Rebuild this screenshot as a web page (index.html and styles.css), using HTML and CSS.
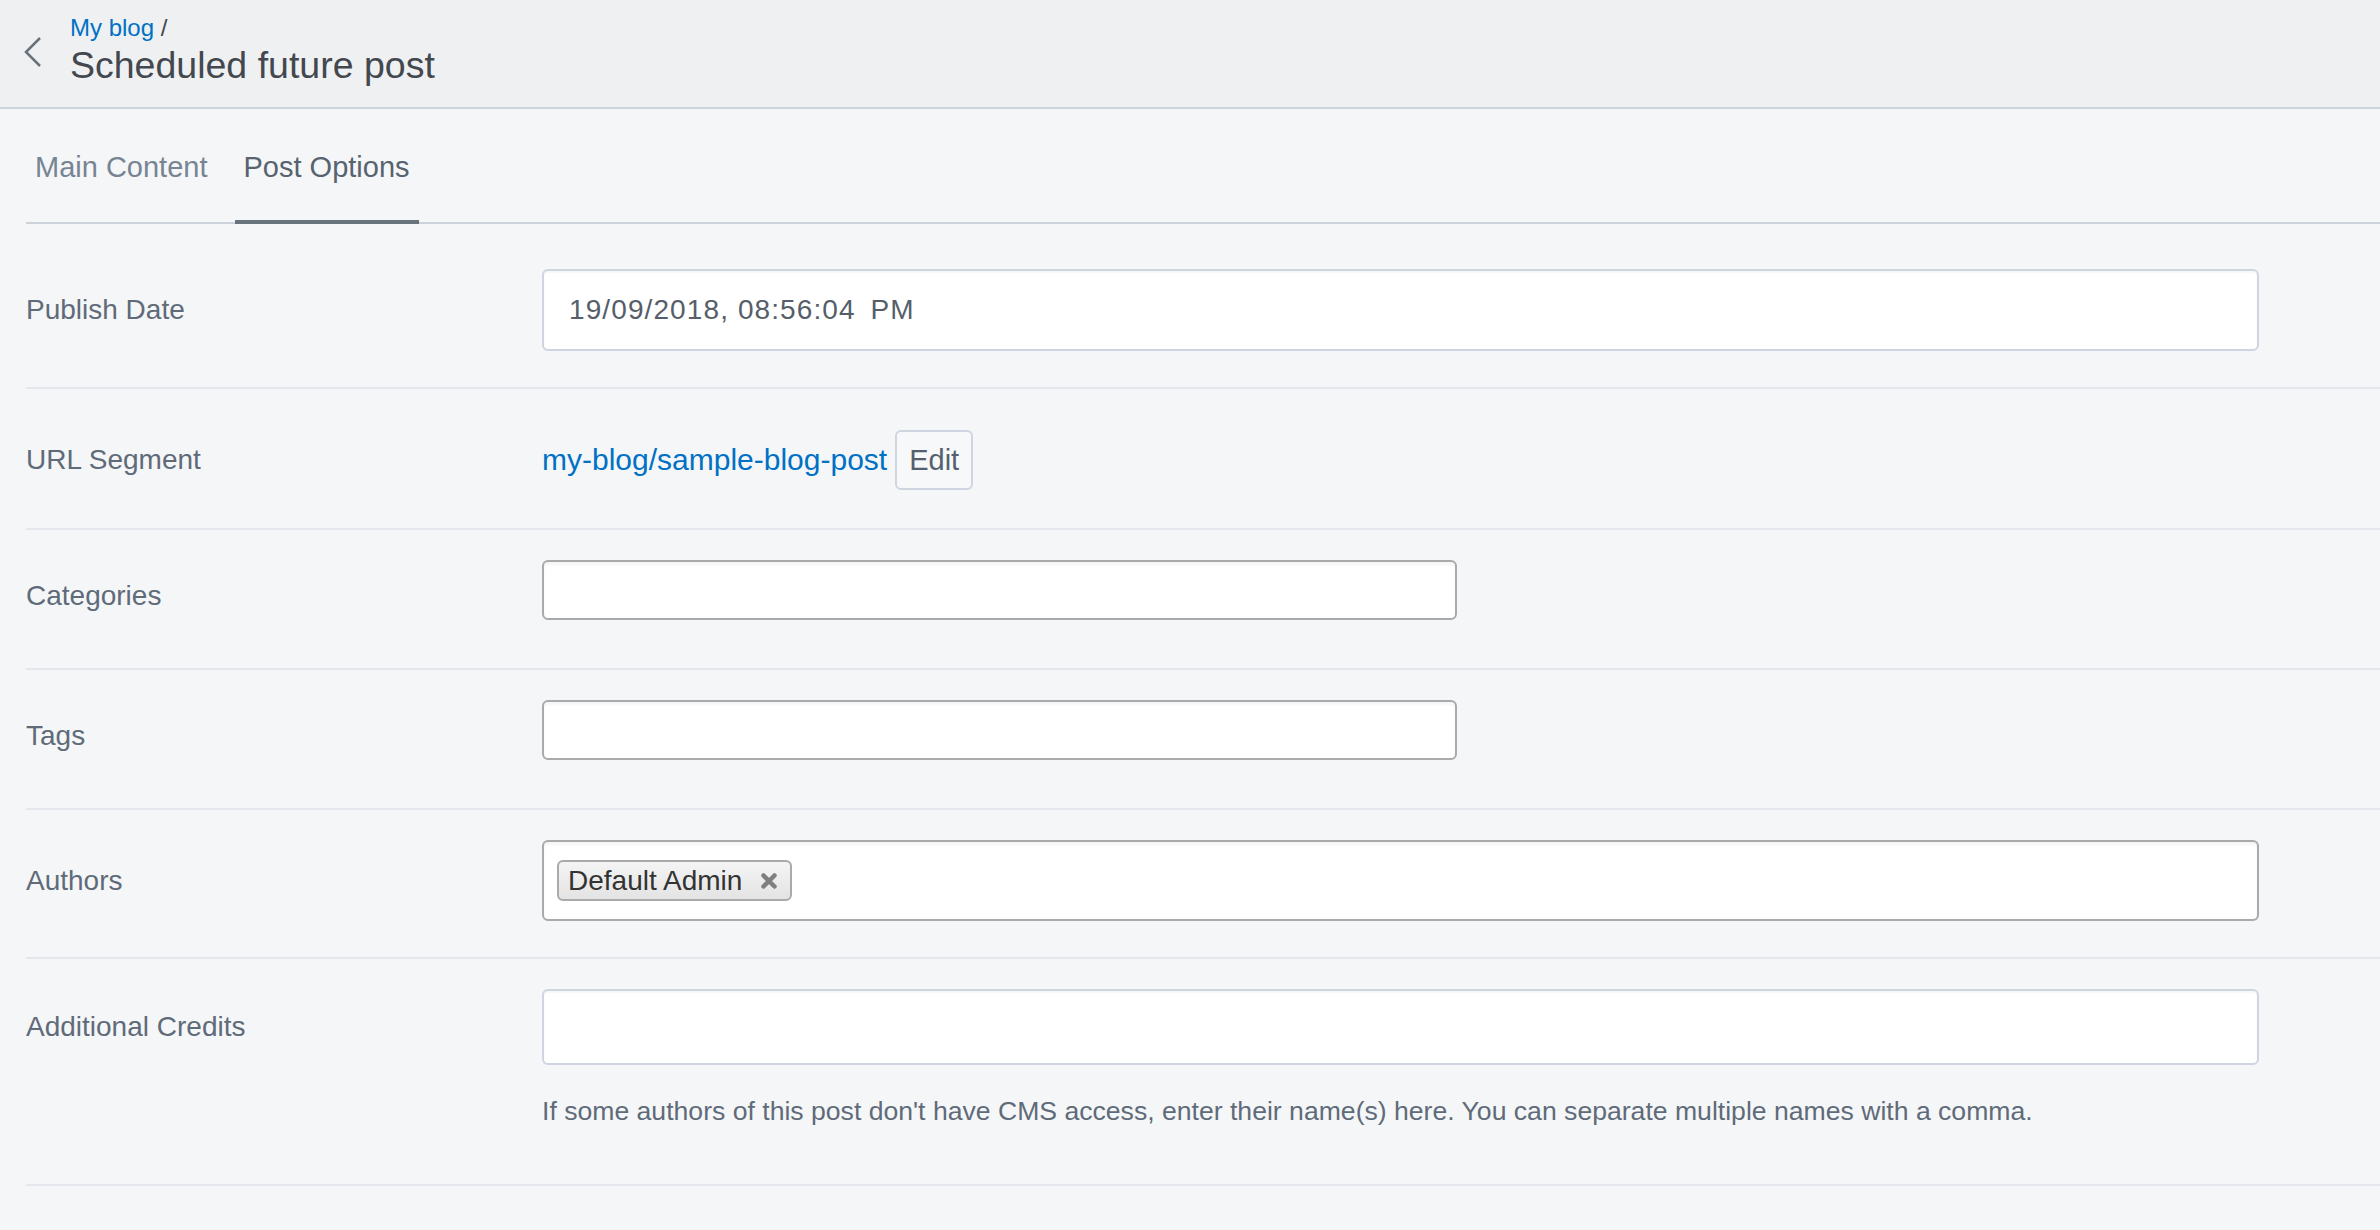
FILE: index.html
```html
<!DOCTYPE html>
<html lang="en">
<head>
    <meta charset="UTF-8">
    <meta name="viewport" content="width=device-width, initial-scale=1.0">
    <title>Scheduled future post</title>
    <link rel="stylesheet" href="styles.css">
</head>
<body>
    <header class="toolbar">
        <a class="back" href="#" aria-label="Back">
            <svg width="18" height="32" viewBox="0 0 18 32">
                <polyline points="16,2 2,16 16,30" fill="none" stroke="#66727d" stroke-width="2.5"/>
            </svg>
        </a>
        <div class="toolbar-titles">
            <div class="breadcrumb"><a href="#">My blog</a> /</div>
            <h1 class="page-title">Scheduled future post</h1>
        </div>
    </header>

    <main class="editor">
        <nav class="tabs">
            <a class="tab" href="#">Main Content</a>
            <a class="tab tab--active" href="#">Post Options</a>
        </nav>

        <div class="fields">
            <!-- Publish date -->
            <div class="field">
                <div class="field-row">
                    <label class="field-label">Publish Date</label>
                    <div class="text-input text-input--date">19/09/2018, 08:56:04 <span class="ampm">PM</span></div>
                </div>
            </div>

            <!-- URL segment -->
            <div class="field field--url">
                <div class="field-row">
                    <label class="field-label">URL Segment</label>
                    <a class="url-link" href="#">my-blog/sample-blog-post</a>
                    <button class="btn" type="button">Edit</button>
                </div>
            </div>

            <div class="field">
                <div class="field-row">
                    <label class="field-label">Categories</label>
                    <div class="select-box"></div>
                </div>
            </div>

            <div class="field">
                <div class="field-row">
                    <label class="field-label">Tags</label>
                    <div class="select-box"></div>
                </div>
            </div>

            <div class="field">
                <div class="field-row">
                    <label class="field-label">Authors</label>
                    <div class="tag-field">
                        <span class="chip">Default Admin
                            <svg class="chip-close" width="18" height="18" viewBox="0 0 18 18">
                                <path d="M3.5 3.5 L14.5 14.5 M14.5 3.5 L3.5 14.5" stroke="#7f7f7f" stroke-width="4.5" stroke-linecap="round"/>
                            </svg>
                        </span>
                    </div>
                </div>
            </div>

            <div class="field field--last">
                <div class="field-row">
                    <label class="field-label">Additional Credits</label>
                    <div class="text-input text-input--credits"></div>
                </div>
                <p class="help">If some authors of this post don't have CMS access, enter their name(s) here. You can separate multiple names with a comma.</p>
            </div>
        </div>
    </main>
</body>
</html>
```

FILE: styles.css
```css
body {
    margin: 0;
    font-family: "Liberation Sans", Arial, sans-serif;
    background: #f5f6f8;
    color: #5f6b78;
}
a {
    text-decoration: none;
}

/* Barra superior */
.toolbar {
    display: flex;
    align-items: flex-start;
    height: 109px;
    box-sizing: border-box;
    padding-top: 13px;
    background: #eff0f2;
    border-bottom: 2px solid #cdd3db;
}
.back {
    display: block;
    margin: 23px 0 0 24px;
}
.back svg {
    display: block;
}
.toolbar-titles {
    margin-left: 28px;
}
.breadcrumb {
    font-size: 24px;
    line-height: 30px;
    color: #43484f;
}
.breadcrumb a {
    color: #0071c4;
}
.page-title {
    margin: 0;
    font-size: 37.5px;
    line-height: 44px;
    font-weight: normal;
    color: #43484f;
}

/* Pestañas */
.tabs {
    display: flex;
    gap: 18px;
    margin-left: 26px;
    border-bottom: 2px solid #cdd3db;
}
.tab {
    padding: 5px 9px 0;
    line-height: 106px;
    font-size: 29px;
    color: #778492;
    border-bottom: 4px solid transparent;
    margin-bottom: -2px;
}
.tab--active {
    color: #57636f;
    border-bottom-color: #68737e;
}

/* Campos */
.fields {
    margin-left: 26px;
    padding-top: 15px;
}
.field {
    padding: 30px 0 36px;
    border-bottom: 2px solid #e4e7eb;
}
.field--url {
    padding-top: 41px;
    padding-bottom: 38px;
}
.field--last {
    padding-bottom: 38px;
}
.field-row {
    display: flex;
    align-items: center;
}
.field-label {
    flex: 0 0 516px;
    font-size: 28px;
    color: #5f6b78;
}
.text-input {
    display: flex;
    align-items: center;
    width: 1717px;
    height: 82px;
    box-sizing: border-box;
    padding: 0 25px;
    background: #fff;
    border: 2px solid #ced5e1;
    border-radius: 6px;
    box-shadow: inset 0 2px 2px rgba(0, 0, 0, 0.04);
    font-size: 28px;
    color: #555e69;
    white-space: pre;
}
.text-input--date {
    letter-spacing: 1.1px;
}
.ampm {
    margin-left: 6px;
}
.text-input--credits {
    height: 76px;
}
.url-link {
    font-size: 30px;
    color: #0071c4;
}
.btn {
    height: 60px;
    margin-left: 8px;
    padding: 0 12px;
    background: #f7f8fa;
    border: 2px solid #ced5e1;
    border-radius: 6px;
    font-family: "Liberation Sans", Arial, sans-serif;
    font-size: 29px;
    color: #55606c;
}
.select-box {
    width: 915px;
    height: 60px;
    box-sizing: border-box;
    margin-bottom: 12px;
    background: #fff;
    border: 2px solid #aaa;
    border-radius: 6px;
    box-shadow: inset 0 3px 3px rgba(0, 0, 0, 0.04);
}
.tag-field {
    display: flex;
    align-items: center;
    width: 1717px;
    height: 81px;
    box-sizing: border-box;
    padding: 0 13px;
    background: #fff;
    border: 2px solid #aaa;
    border-radius: 6px;
    box-shadow: inset 0 3px 3px rgba(0, 0, 0, 0.04);
}
.chip {
    display: flex;
    align-items: center;
    gap: 18px;
    height: 41px;
    box-sizing: border-box;
    padding: 0 12px 0 9px;
    background: linear-gradient(#f5f5f5, #e3e3e3);
    border: 2px solid #aaa;
    border-radius: 6px;
    font-size: 28px;
    color: #333;
}
.help {
    margin: 27px 0 16px 516px;
    font-size: 26.6px;
    line-height: 38px;
    color: #5f6b78;
}
```
